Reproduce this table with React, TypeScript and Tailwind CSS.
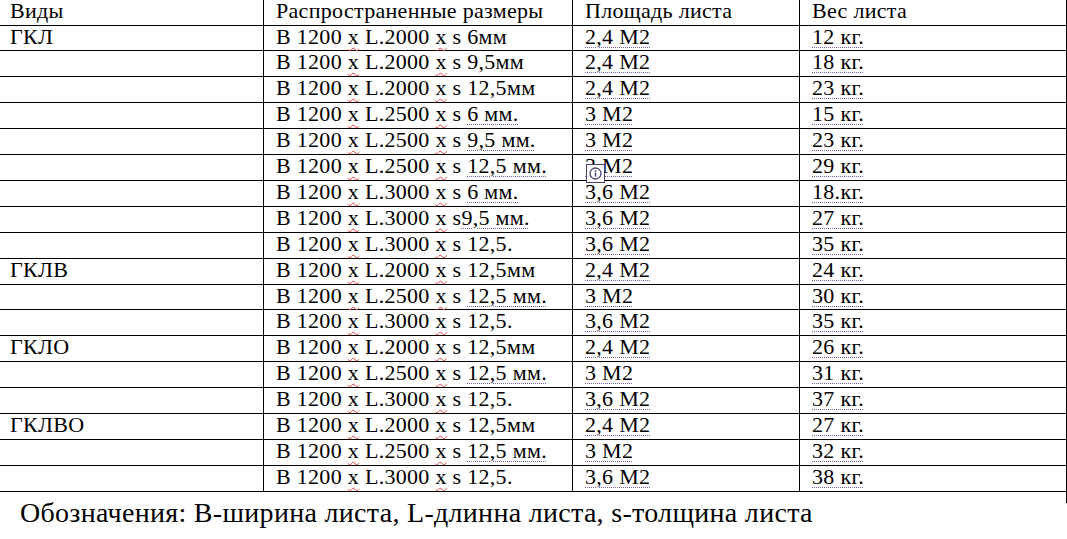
import React from 'react';

type Row = [string, string, string, string];

const rows: Row[] = [
  ['ГКЛ', 'В 1200 x L.2000 x s 6мм', '2,4 М2', '12 кг.'],
  ['', 'В 1200 x L.2000 x s 9,5мм', '2,4 М2', '18 кг.'],
  ['', 'В 1200 x L.2000 x s 12,5мм', '2,4 М2', '23 кг.'],
  ['', 'В 1200 x L.2500 x s 6 мм.', '3 М2', '15 кг.'],
  ['', 'В 1200 x L.2500 x s 9,5 мм.', '3 М2', '23 кг.'],
  ['', 'В 1200 x L.2500 x s 12,5 мм.', '3 М2', '29 кг.'],
  ['', 'В 1200 x L.3000 x s 6 мм.', '3,6 М2', '18.кг.'],
  ['', 'В 1200 x L.3000 x s9,5 мм.', '3,6 М2', '27 кг.'],
  ['', 'В 1200 x L.3000 x s 12,5.', '3,6 М2', '35 кг.'],
  ['ГКЛВ', 'В 1200 x L.2000 x s 12,5мм', '2,4 М2', '24 кг.'],
  ['', 'В 1200 x L.2500 x s 12,5 мм.', '3 М2', '30 кг.'],
  ['', 'В 1200 x L.3000 x s 12,5.', '3,6 М2', '35 кг.'],
  ['ГКЛО', 'В 1200 x L.2000 x s 12,5мм', '2,4 М2', '26 кг.'],
  ['', 'В 1200 x L.2500 x s 12,5 мм.', '3 М2', '31 кг.'],
  ['', 'В 1200 x L.3000 x s 12,5.', '3,6 М2', '37 кг.'],
  ['ГКЛВО', 'В 1200 x L.2000 x s 12,5мм', '2,4 М2', '27 кг.'],
  ['', 'В 1200 x L.2500 x s 12,5 мм.', '3 М2', '32 кг.'],
  ['', 'В 1200 x L.3000 x s 12,5.', '3,6 М2', '38 кг.'],
];

const dotted = 'underline decoration-dotted decoration-[#7b5ea7] decoration-1 underline-offset-[3px]';
const wavy = 'underline decoration-wavy decoration-[#e0403a] decoration-1 underline-offset-[3px]';

function SizeText({ text }: { text: string }) {
  const parts = text.split(/(x|\d+(?:,\d+)? мм\.)/);
  return (
    <>
      {parts.map((p, i) => {
        if (p === 'x') return <span key={i} className={wavy}>x</span>;
        if (/мм\.$/.test(p)) return <span key={i} className={dotted}>{p}</span>;
        return <span key={i}>{p}</span>;
      })}
    </>
  );
}

function InfoTag() {
  return (
    <div className="absolute left-[13px] top-[9px] w-[19px] h-[19px] bg-white border border-[#4b3f72] flex items-center justify-center">
      <svg width="13" height="13" viewBox="0 0 13 13">
        <circle cx="6.5" cy="6.5" r="5.5" fill="none" stroke="#4b3f72" strokeWidth="1.3" />
        <circle cx="6.5" cy="3.8" r="0.9" fill="#4b3f72" />
        <rect x="5.8" y="5.4" width="1.4" height="4.2" fill="#4b3f72" />
      </svg>
    </div>
  );
}

const cell = 'pt-[1px] leading-[20px] whitespace-nowrap';

export default function App() {
  return (
    <div className="w-[1067px] h-[539px] bg-white text-black overflow-hidden font-['Liberation_Serif','DejaVu_Serif',serif]">
      <div className="relative border-r border-black text-[22px] tracking-[0.3px]">
        <div className="grid grid-cols-[263px_309px_227px_1fr] h-[25.6px] border-b border-black">
          <div className={`${cell} pl-[10px]`}>Виды</div>
          <div className={`${cell} border-l border-black pl-[12px]`}>Распространенные размеры</div>
          <div className={`${cell} border-l border-black pl-[12px]`}>Площадь листа</div>
          <div className={`${cell} border-l border-black pl-[12px]`}>Вес листа</div>
        </div>
        {rows.map((r, i) => (
          <div key={i} className="grid grid-cols-[263px_309px_227px_1fr] h-[25.9px] border-b border-black">
            <div className={`${cell} pl-[10px]`}>{r[0]}</div>
            <div className={`${cell} border-l border-black pl-[12px]`}>
              <SizeText text={r[1]} />
            </div>
            <div className={`${cell} relative border-l border-black pl-[12px]`}>
              <span className={dotted}>{r[2]}</span>
              {i === 5 && <InfoTag />}
            </div>
            <div className={`${cell} border-l border-black pl-[12px]`}>
              <span className={dotted}>{r[3]}</span>
            </div>
          </div>
        ))}
        <div className="absolute right-[-1px] top-full w-px h-[11px] bg-black" />
      </div>
      <div className="pl-[20px] pt-[6px] text-[28px] leading-[30px] tracking-[0.3px] whitespace-nowrap">
        Обозначения: B-ширина листа, L-длинна листа, s-толщина листа
      </div>
    </div>
  );
}
